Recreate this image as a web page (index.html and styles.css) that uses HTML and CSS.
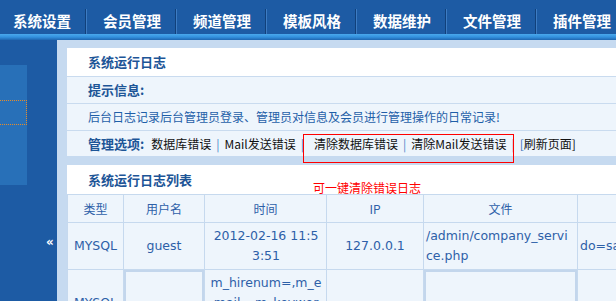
FILE: index.html
```html
<!DOCTYPE html>
<html lang="zh-CN">
<head>
<meta charset="utf-8">
<title>系统运行日志</title>
<link rel="stylesheet" href="styles.css">
</head>
<body>
<nav class="nav">
  <a class="nav-item">系统设置</a>
  <a class="nav-item">会员管理</a>
  <a class="nav-item">频道管理</a>
  <a class="nav-item">模板风格</a>
  <a class="nav-item">数据维护</a>
  <a class="nav-item">文件管理</a>
  <a class="nav-item">插件管理</a>
</nav>
<div class="nav-strip"></div>
<div class="layout">
  <aside class="sidebar">
    <div class="side-block"><div class="side-item"></div></div>
    <span class="side-toggle">«</span>
  </aside>
  <main class="main">
    <section class="panel">
      <div class="panel-title">系统运行日志</div>
      <div class="row row-strong">提示信息:</div>
      <div class="row row-desc">后台日志记录后台管理员登录、管理员对信息及会员进行管理操作的日常记录!</div>
      <div class="row row-opts"><b class="opt-label">管理选项:</b><a class="opt">数据库错误</a><span class="sep">|</span><a class="opt">Mail发送错误</a><span class="sep">|</span><a class="opt opt-gap">清除数据库错误</a><span class="sep">|</span><a class="opt">清除Mail发送错误</a><span class="sep">|</span><a class="opt"><span class="br">[</span>刷新页面]</a></div>
    </section>
    <section class="panel panel-list">
      <div class="panel-title panel-title-list">系统运行日志列表</div>
      <table class="log-table">
        <colgroup>
          <col class="c1"><col class="c2"><col class="c3"><col class="c4"><col class="c5"><col class="c6">
        </colgroup>
        <thead>
          <tr><th>类型</th><th>用户名</th><th>时间</th><th>IP</th><th>文件</th><th></th></tr>
        </thead>
        <tbody>
          <tr>
            <td class="narrow">MYSQL</td>
            <td>guest</td>
            <td class="tight">2012-02-16 11:53:51</td>
            <td>127.0.0.1</td>
            <td class="left">/admin/company_service.php</td>
            <td class="left">do=save</td>
          </tr>
          <tr>
            <td class="narrow">MYSQL</td>
            <td class="boxed"></td>
            <td class="tight">m_hirenum=,m_email=,m_keyword=</td>
            <td></td>
            <td class="boxed"></td>
            <td></td>
          </tr>
        </tbody>
      </table>
    </section>
  </main>
</div>
<div class="note-box"></div>
<div class="note-text">可一键清除错误日志</div>
</body>
</html>
```

FILE: styles.css
```css
* { box-sizing: border-box; }
html, body { margin: 0; }
body {
  width: 616px;
  height: 301px;
  overflow: hidden;
  position: relative;
  font-family: "Noto Sans CJK SC", "DejaVu Sans", sans-serif;
  font-size: 12px;
  background: #c6daf0;
}
.nav {
  display: flex;
  height: 34px;
  margin-left: -3px;
  background: #1d5ba4;
  white-space: nowrap;
}
.nav-item {
  flex: 0 0 90px;
  color: #fff;
  font-weight: bold;
  font-size: 14.5px;
  text-align: center;
  padding-top: 7px;
  line-height: 27px;
  background: linear-gradient(to right, #11407a 50%, #3d7cc3 50%) no-repeat right bottom / 2px 25px;
}
.nav-strip {
  height: 6px;
  background: linear-gradient(#4aa8ec, #3391de 50%, #1f66b2);
}
.layout {
  display: flex;
  height: 261px;
}
.sidebar {
  flex: 0 0 57px;
  position: relative;
  background: #1d5ba4;
  padding-top: 25px;
}
.side-block {
  width: 27px;
  height: 120px;
  background: #2870b8;
  padding-top: 35px;
}
.side-item {
  height: 25px;
  border: 1px dotted #e58c2a;
  border-left: 0;
}
.side-toggle {
  position: absolute;
  left: 46px;
  top: 195px;
  color: #fff;
  font: bold 12px/14px "DejaVu Sans", sans-serif;
}
.main {
  flex: 1;
  min-width: 0;
  overflow: hidden;
  padding: 8px 0 0 10px;
}
.panel {
  width: 720px;
  background: #fff;
}
.panel-list { margin-top: 9px; }
.panel-title {
  height: 29px;
  line-height: 28px;
  padding-left: 21px;
  font-size: 13px;
  font-weight: bold;
  color: #1d5597;
  border-bottom: 1px solid #c9dbef;
}
.panel-title-list {
  height: 29px;
  line-height: 29px;
  border-bottom: 0;
}
.row {
  height: 27px;
  line-height: 26px;
  padding-left: 21px;
  background: #eef5fc;
  border-bottom: 1px solid #c9dbef;
  white-space: nowrap;
}
.row-strong {
  font-size: 13px;
  font-weight: bold;
  color: #1d5597;
}
.row-desc { color: #1f5fa8; }
.row-opts {
  height: 25px;
  line-height: 25px;
  border-bottom: 0;
  color: #111;
}
.opt-label {
  font-size: 13px;
  color: #1d5597;
  margin-right: 7px;
}
.opt { color: #111; }
.opt-gap { margin-left: 5px; }
.sep {
  color: #4a86c8;
  margin: 0 5px;
}
.br { color: #3b72b8; }
.log-table {
  table-layout: fixed;
  border-collapse: collapse;
  width: 660px;
  font-family: "DejaVu Sans", "Noto Sans CJK SC", sans-serif;
  font-size: 12.5px;
  color: #2d60a8;
}
.c1 { width: 56px; }
.c2 { width: 81px; }
.c3 { width: 122px; }
.c4 { width: 97px; }
.c5 { width: 154px; }
.c6 { width: 150px; }
.log-table th,
.log-table td {
  border: 1px solid #c6d9ee;
  background: #eef5fc;
  text-align: center;
  vertical-align: middle;
}
.log-table th {
  height: 28px;
  font-family: "Noto Sans CJK SC", sans-serif;
  font-size: 12px;
  font-weight: normal;
  line-height: 20px;
  padding: 0;
}
.log-table td {
  padding: 3px 6px;
  line-height: 20px;
  word-break: break-all;
}
.log-table td.narrow { padding: 3px 2px; }
.log-table td.tight { padding: 3px 4px 3px 5px; }
.log-table td.left {
  text-align: left;
  padding: 3px 6px 3px 2px;
}
.log-table td.boxed {
  box-shadow: inset 0 0 0 2px #c3d6ec;
}
.note-box {
  position: absolute;
  left: 303px;
  top: 134px;
  width: 211px;
  height: 29px;
  border: 1px solid #ff0000;
}
.note-text {
  position: absolute;
  left: 313px;
  top: 181px;
  font-size: 12px;
  line-height: 14px;
  color: #ff0000;
}
```
